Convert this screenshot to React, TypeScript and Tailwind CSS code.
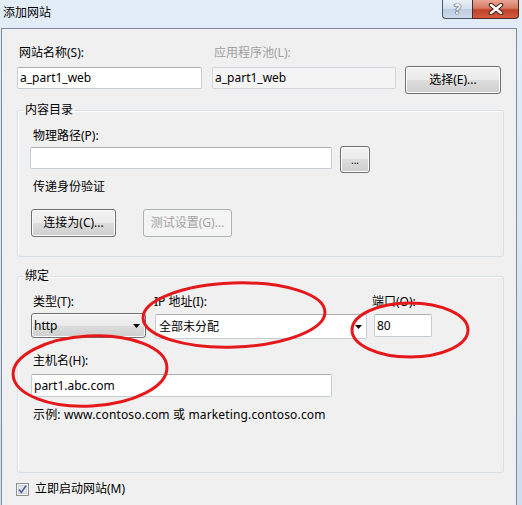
import type { ReactNode } from "react"

const face =
  "rounded-[3px] border border-[#707070] bg-[linear-gradient(#f2f2f2_0%,#ebebeb_50%,#dddddd_50%,#cfcfcf_100%)] shadow-[inset_0_0_0_1px_#fcfcfc] text-black"

const btn = `flex items-center justify-center ${face}`

const btnOff =
  "flex items-center justify-center rounded-[3px] border border-[#adb2b5] bg-[#f4f4f4] text-[#a3a3a3]"

const box =
  "flex items-center rounded-[2px] border border-[#c5ccd6] border-t-[#abadb3] bg-white pl-[2px]"

function Group({ title, children, className }: { title: string; children: ReactNode; className?: string }) {
  return (
    <fieldset
      className={`ml-[15px] w-[487px] rounded-[3px] border border-[#d5dfe5] shadow-[inset_1px_1px_0_#fff] ${className ?? ""}`}
    >
      <legend className="ml-[5px] px-[2px] leading-[16px]">{title}</legend>
      <div className="flex flex-col pl-[12px]">{children}</div>
    </fieldset>
  )
}

function Arrow() {
  return (
    <svg width="7" height="4" viewBox="0 0 7 4">
      <path d="M0 0h7L3.5 4z" fill="#000" />
    </svg>
  )
}

export default function App() {
  return (
    <div className="relative h-[505px] w-[522px] overflow-hidden bg-[linear-gradient(#e3edf8,#cddef1)] font-['Noto_Sans','Noto_Sans_CJK_SC',sans-serif] text-[12px] leading-[16px] text-black">
      {/* title bar */}
      <div className="flex h-[28px] items-start">
        <span className="ml-[3px] mt-[5px]">添加网站</span>
        <div className="ml-auto mr-[3px] flex">
          <div className="flex h-[19px] w-[30px] items-center justify-center rounded-bl-[4px] border border-t-0 border-r-0 border-[#4b5868] bg-[linear-gradient(#e9f0f8_0%,#d3dfed_50%,#bccbde_50%,#cddbeb_100%)]">
            <span className="text-[14px] font-bold leading-[14px] text-white [text-shadow:0_0_1px_#2f3a48,0_0_1px_#2f3a48,0_0_1px_#2f3a48]">
              ?
            </span>
          </div>
          <div className="flex h-[19px] w-[47px] items-center justify-center rounded-br-[4px] border border-t-0 border-[#4a2a24] bg-[linear-gradient(#e8a693_0%,#d77a62_45%,#c2412a_55%,#d45b3f_100%)]">
            <svg width="16" height="12" viewBox="0 0 16 12">
              <path d="M3 2l10 8M13 2L3 10" stroke="#4a1f18" strokeWidth="4.5" strokeLinecap="round" />
              <path d="M3 2l10 8M13 2L3 10" stroke="#fff" strokeWidth="2.5" strokeLinecap="round" />
            </svg>
          </div>
        </div>
      </div>

      {/* client area */}
      <div className="ml-px flex h-[477px] w-[516px] flex-col border border-b-0 border-[#7f8c9c] bg-[#f0f0f0]">
        {/* name / pool */}
        <div className="ml-[15px] mt-[16px] flex">
          <span className="ml-[2px] w-[193px]">网站名称(S):</span>
          <span className="ml-[2px] text-[#a0a0a0]">应用程序池(L):</span>
        </div>
        <div className="ml-[15px] mt-[5px] flex items-start">
          <div className={`${box} mt-px h-[22px] w-[185px]`}>a_part1_web</div>
          <div className="ml-[10px] mt-px flex h-[22px] w-[184px] items-center rounded-[2px] border border-[#d3d7dc] bg-[#f4f4f4] pl-[2px]">
            a_part1_web
          </div>
          <div className={`${btn} ml-[9px] h-[28px] w-[96px]`}>选择(E)...</div>
        </div>

        <Group title="内容目录" className="mt-[8px] pb-[19px]">
          <span className="ml-[3px] mt-[10px]">物理路径(P):</span>
          <div className="mt-[2px] flex items-start">
            <div className={`${box} mt-px h-[22px] w-[302px]`} />
            <div className={`${btn} ml-[8px] h-[27px] w-[30px] text-[10px] leading-[10px]`}>...</div>
          </div>
          <span className="ml-[3px] mt-[6px]">传递身份验证</span>
          <div className="ml-px mt-[14px] flex">
            <div className={`${btn} h-[28px] w-[85px]`}>连接为(C)...</div>
            <div className={`${btnOff} ml-[27px] h-[28px] w-[89px]`}>测试设置(G)...</div>
          </div>
        </Group>

        <Group title="绑定" className="mt-[11px] pb-[49px]">
          <div className="mt-[10px] flex">
            <span className="ml-[3px] w-[121px]">类型(T):</span>
            <span className="w-[218px]">IP 地址(I):</span>
            <span>端口(O):</span>
          </div>
          <div className="mt-[3px] flex items-start">
            <div className={`${face} ml-px flex h-[25px] w-[115px] items-center justify-between pl-[2px] pr-[5px]`}>
              <span>http</span>
              <Arrow />
            </div>
            <div className="ml-[9px] mt-px flex h-[25px] w-[212px] items-center justify-between rounded-[2px] border border-[#c5ccd6] border-t-[#abadb3] bg-white pl-[3px] pr-[4px]">
              <span>全部未分配</span>
              <Arrow />
            </div>
            <div className={`${box} ml-[7px] mt-px h-[23px] w-[58px]`}>80</div>
          </div>
          <span className="ml-[3px] mt-[14px]">主机名(H):</span>
          <div className={`${box} ml-px mt-[5px] h-[23px] w-[301px]`}>part1.abc.com</div>
          <span className="ml-[3px] mt-[10px] tracking-[0.15px]">示例: www.contoso.com 或 marketing.contoso.com</span>
        </Group>

        <label className="ml-[14px] mt-[8px] flex items-center gap-[6px]">
          <svg width="13" height="13" viewBox="0 0 13 13">
            <rect x="0.5" y="0.5" width="12" height="12" fill="#f4f4f4" stroke="#8e8f8f" />
            <rect x="2.5" y="2.5" width="8" height="8" fill="#e4e6ea" stroke="#d0d3d8" />
            <path d="M3 6.5l2.3 3L10 2.8" fill="none" stroke="#4a5f97" strokeWidth="1.6" />
          </svg>
          <span>立即启动网站(M)</span>
        </label>
      </div>

      {/* red annotation marks */}
      <svg className="pointer-events-none absolute left-0 top-0" width="522" height="505">
        <g fill="none" stroke="#e5181b" strokeWidth="3">
          <ellipse cx="234" cy="315" rx="91" ry="32" transform="rotate(-2 234 315)" />
          <ellipse cx="410" cy="330" rx="58" ry="27" />
          <ellipse cx="90" cy="371" rx="77" ry="35" transform="rotate(-3 90 371)" />
        </g>
      </svg>
    </div>
  )
}
